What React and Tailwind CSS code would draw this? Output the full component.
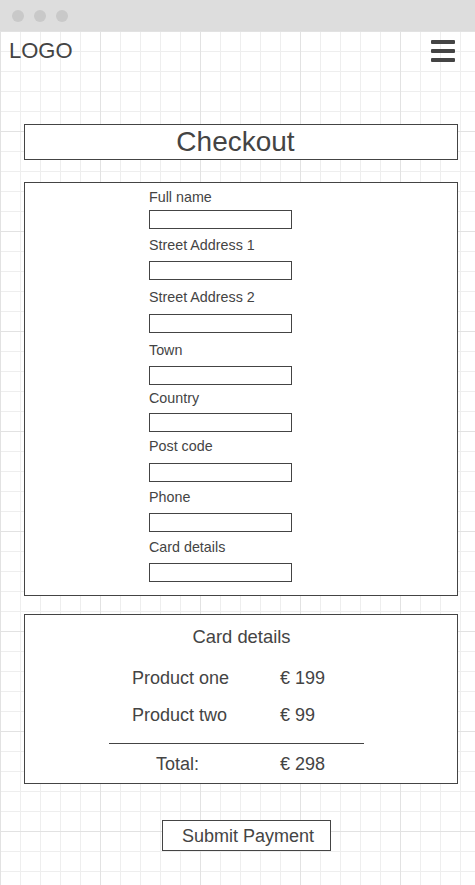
const fields = [
  { label: 'Full name', lt: 'mt-[6px]', it: 'mt-[5px]' },
  { label: 'Street Address 1', lt: 'mt-[8px]', it: 'mt-[8px]' },
  { label: 'Street Address 2', lt: 'mt-[9px]', it: 'mt-[9px]' },
  { label: 'Town', lt: 'mt-[9px]', it: 'mt-[8px]' },
  { label: 'Country', lt: 'mt-[5px]', it: 'mt-[7px]' },
  { label: 'Post code', lt: 'mt-[6px]', it: 'mt-[9px]' },
  { label: 'Phone', lt: 'mt-[7px]', it: 'mt-[8px]' },
  { label: 'Card details', lt: 'mt-[7px]', it: 'mt-[8px]' },
]

const products = [
  { name: 'Product one', price: '€ 199', top: 'mt-[19px]' },
  { name: 'Product two', price: '€ 99', top: 'mt-[15px]' },
]

export default function App() {
  return (
    <div className="w-[475px] h-[885px] overflow-hidden bg-white text-[#444] font-['Liberation_Sans',Arial,sans-serif]">
      <div className="h-[31px] bg-[#dddddd] flex items-center gap-[10px] pl-[12px]">
        <span className="w-[12px] h-[12px] rounded-full bg-[#c9c9c9]" />
        <span className="w-[12px] h-[12px] rounded-full bg-[#c9c9c9]" />
        <span className="w-[12px] h-[12px] rounded-full bg-[#c9c9c9]" />
      </div>

      <div className="h-[854px] bg-[linear-gradient(to_right,#e2e2e2_1px,transparent_1px),linear-gradient(to_bottom,#e2e2e2_1px,transparent_1px),linear-gradient(to_right,#eeeeee_1px,transparent_1px),linear-gradient(to_bottom,#eeeeee_1px,transparent_1px)] bg-[size:100px_100px,100px_100px,20px_20px,20px_20px]">
        <div className="h-[40px] flex items-center justify-between pl-[9px] pr-[20px]">
          <span className="text-[22px] leading-[26px]">LOGO</span>
          <div className="flex flex-col gap-[5px] w-[24px]">
            <span className="h-[4px] rounded-[1px] bg-[#444]" />
            <span className="h-[4px] rounded-[1px] bg-[#444]" />
            <span className="h-[4px] rounded-[1px] bg-[#444]" />
          </div>
        </div>

        <div className="mt-[53px] ml-[24px] w-[434px] h-[36px] border border-[#444] bg-white flex items-center justify-center">
          <h1 className="text-[28px] leading-[32px] pr-[11px]">Checkout</h1>
        </div>

        <div className="mt-[22px] ml-[24px] w-[434px] h-[414px] border border-[#444] bg-white pl-[124px] flex flex-col">
          {fields.map(f => (
            <div key={f.label} className="flex flex-col">
              <label className={`${f.lt} text-[14.3px] leading-[16px]`}>{f.label}</label>
              <input className={`${f.it} w-[143px] h-[19px] border border-[#444] bg-white outline-none`} />
            </div>
          ))}
        </div>

        <div className="mt-[18px] ml-[24px] w-[434px] h-[170px] border border-[#444] bg-white flex flex-col">
          <h2 className="mt-[11px] text-[18.4px] leading-[22px] text-center pl-[1px]">Card details</h2>
          {products.map(p => (
            <div key={p.name} className={`${p.top} flex text-[18px] leading-[22px]`}>
              <span className="ml-[107px] w-[148px]">{p.name}</span>
              <span>{p.price}</span>
            </div>
          ))}
          <div className="mt-[17px] ml-[84px] w-[255px] h-px bg-[#444]" />
          <div className="mt-[9px] flex text-[18px] leading-[22px]">
            <span className="ml-[131px] w-[124px]">Total:</span>
            <span>€ 298</span>
          </div>
        </div>

        <button className="mt-[36px] ml-[162px] w-[169px] h-[31px] border border-[#444] bg-white text-[18px] leading-[22px] pl-[3px]">
          Submit Payment
        </button>
      </div>
    </div>
  )
}
